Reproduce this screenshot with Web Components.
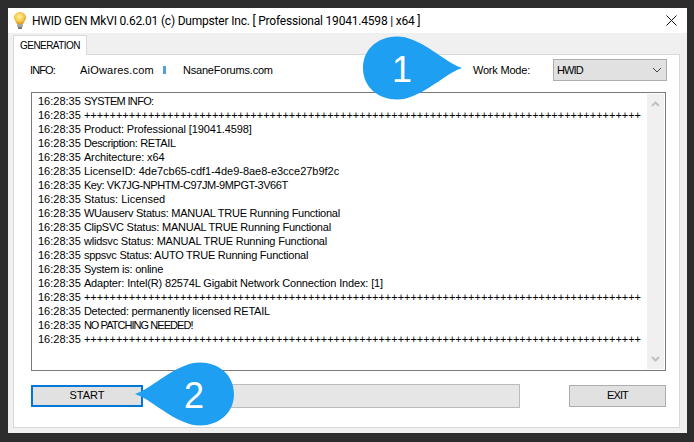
<!DOCTYPE html>
<html>
<head>
<meta charset="utf-8">
<title>HWID GEN</title>
<style>
html, body { margin: 0; height: 100%; }
body { background: #2d2d2d; padding: 8px 7px 9px 8px; box-sizing: border-box; font: 11px "Liberation Sans", Arial, sans-serif; color: #000; overflow: hidden; }
</style>
</head>
<body>
<hwid-window>
  <hwid-titlebar slot="title">HWID GEN MkVI 0.62.01 (c) Dumpster Inc. [ Professional 19041.4598 | x64 ]</hwid-titlebar>
  <hwid-tab slot="tab">GENERATION</hwid-tab>
  <hwid-info slot="top"></hwid-info>
  <hwid-log slot="log"></hwid-log>
  <hwid-actions slot="actions"></hwid-actions>
</hwid-window>
<call-out num="1" dir="right" style="left:363px;top:36px"></call-out>
<call-out num="2" dir="left" style="left:135px;top:362px"></call-out>
<script>
class HwidWindow extends HTMLElement {
    constructor() {
        super();
        this.attachShadow({ mode: 'open' });
    }
    connectedCallback() {
        this.shadowRoot.innerHTML = `
        <style>
            :host { display: flex; flex-direction: column; height: 100%; background: #f0f0f0; }
            .strip { display: flex; padding: 2px 0 0 5px; height: 19px; }
            .panel { flex: 1; margin: 0 7px 5px 5px; background: #fff; border: 1px solid #d9d9d9; padding: 4px 13px 0 17px; display: flex; flex-direction: column; }
        </style>
        <slot name="title"></slot>
        <div class="strip"><slot name="tab"></slot></div>
        <div class="panel">
            <slot name="top"></slot>
            <slot name="log"></slot>
            <slot name="actions"></slot>
        </div>`;
    }
}
class HwidTitlebar extends HTMLElement {
    constructor() {
        super();
        this.attachShadow({ mode: 'open' });
    }
    connectedCallback() {
        this.shadowRoot.innerHTML = `
        <style>
            :host { display: flex; align-items: center; height: 25px; background: #fff; padding-left: 6px; }
            svg { display: block; }
            .text { margin-left: 6px; flex: 1; font: 12px Roboto, "Liberation Sans", sans-serif; letter-spacing: -.2px; white-space: nowrap; }
            .close { margin-right: 10px; }
        </style>
        <svg width="12" height="17" viewBox="0 0 12 17">
            <defs><radialGradient id="b" cx=".45" cy=".4" r=".6"><stop offset="0" stop-color="#fff0a0"/><stop offset=".6" stop-color="#f6cc50"/><stop offset="1" stop-color="#dc9c28"/></radialGradient></defs>
            <path d="M6 0C2.700 0 0 2.500 0 5.600c0 2.600 2 3.700 2.800 6.400h6.400C10 9.300 12 8.200 12 5.600 12 2.500 9.300 0 6 0z" fill="url(#b)"/>
            <rect x="3" y="12" width="6" height="3" rx="1" fill="#a5a598"/>
            <rect x="4" y="15" width="4" height="2" fill="#77776c"/>
        </svg>
        <span class="text"><slot></slot></span>
        <svg class="close" width="11" height="11" viewBox="0 0 11 11"><path d="M.5.5l10 10M10.500.5l-10 10" stroke="#111" stroke-width="1" fill="none"/></svg>`;
    }
}
class HwidTab extends HTMLElement {
    constructor() {
        super();
        this.attachShadow({ mode: 'open' });
    }
    connectedCallback() {
        this.shadowRoot.innerHTML = `
        <style>
            :host { display: flex; align-items: center; justify-content: center; width: 74px; box-sizing: border-box; height: 20px; background: #fff; border: 1px solid #d9d9d9; border-bottom: 0; font-size: 10px; letter-spacing: -.55px; position: relative; z-index: 1; }
        </style>
        <slot></slot>`;
    }
}
class HwidInfo extends HTMLElement {
    constructor() {
        super();
        this.attachShadow({ mode: 'open' });
    }
    connectedCallback() {
        this.shadowRoot.innerHTML = `
        <style>
            :host { display: flex; align-items: center; height: 22px; }
            .info { width: 50px; margin-left: -1px; letter-spacing: -.9px; }
            .site { letter-spacing: .2px; }
            .sep { width: 3px; height: 8px; margin: 0 17px 0 9px; background: #4f9ee0; }
            .site2 { letter-spacing: -.2px; }
            .mode { margin-left: auto; margin-right: 23px; letter-spacing: -.2px; }
            .combo { width: 114px; height: 22px; box-sizing: border-box; margin-right: -1px; border: 1px solid #adadad; background: #e1e1e1; display: flex; align-items: center; justify-content: space-between; padding: 0 4px 1px 3px; }
            .combo span { letter-spacing: -.9px; }
        </style>
        <span class="info">INFO:</span>
        <span class="site">AiOwares.com</span>
        <span class="sep"></span>
        <span class="site2">NsaneForums.com</span>
        <span class="mode">Work Mode:</span>
        <div class="combo">
            <span>HWID</span>
            <svg width="10" height="6" viewBox="0 0 10 6"><path d="M1 1l4 4 4-4" stroke="#444" fill="none"/></svg>
        </div>`;
    }
}
// text, letter-spacing to match the hinted widths of the original
const LOG_LINES = [
    ['SYSTEM INFO:', -.67],
    ['+'],
    ['Product: Professional [19041.4598]', -.12],
    ['Description: RETAIL', -.37],
    ['Architecture: x64', -.12],
    ['LicenseID: 4de7cb65-cdf1-4de9-8ae8-e3cce27b9f2c', -.02],
    ['Key: VK7JG-NPHTM-C97JM-9MPGT-3V66T', -.42],
    ['Status: Licensed', 0],
    ['WUauserv Status: MANUAL TRUE Running Functional', -.25],
    ['ClipSVC Status: MANUAL TRUE Running Functional', -.24],
    ['wlidsvc Status: MANUAL TRUE Running Functional', -.19],
    ['sppsvc Status: AUTO TRUE Running Functional', -.25],
    ['System is: online', -.23],
    ['Adapter: Intel(R) 82574L Gigabit Network Connection Index: [1]', -.15],
    ['+'],
    ['Detected: permanently licensed RETAIL', -.24],
    ['NO PATCHING NEEDED!', -.95],
    ['+']
];
class HwidLog extends HTMLElement {
    constructor() {
        super();
        this.attachShadow({ mode: 'open' });
    }
    connectedCallback() {
        const rows = LOG_LINES.map(([t, ls]) => t === '+'
            ? `<div>16:28:35 <span style="letter-spacing:-.02px">${'+'.repeat(87)}</span></div>`
            : `<div>16:28:35 <span style="letter-spacing:${ls}px">${t}</span></div>`).join('');
        this.shadowRoot.innerHTML = `
        <style>
            :host { display: flex; margin-top: 11px; height: 279px; box-sizing: border-box; border: 1px solid #7a7a7a; background: #fff; padding: 1px; }
            .lines { flex: 1; padding: 0 0 0 5px; line-height: 14px; white-space: nowrap; overflow: hidden; }
            .bar { width: 17px; background: #f0f0f0; display: flex; flex-direction: column; justify-content: space-between; align-items: center; padding: 7px 0; box-sizing: border-box; }
        </style>
        <div class="lines">${rows}</div>
        <div class="bar">
            <svg width="9" height="6" viewBox="0 0 9 6"><path d="M1 5l3.500-3.500L8 5" stroke="#c0c0c0" stroke-width="2" fill="none"/></svg>
            <svg width="9" height="6" viewBox="0 0 9 6"><path d="M1 1l3.500 3.500L8 1" stroke="#c0c0c0" stroke-width="2" fill="none"/></svg>
        </div>`;
    }
}
class HwidActions extends HTMLElement {
    constructor() {
        super();
        this.attachShadow({ mode: 'open' });
    }
    connectedCallback() {
        this.shadowRoot.innerHTML = `
        <style>
            :host { display: flex; align-items: center; margin-top: 13px; height: 24px; }
            button { height: 22px; box-sizing: border-box; background: #e1e1e1; border: 1px solid #adadad; font: inherit; padding: 0 0 2px; color: #000; }
            .start { width: 112px; border: 2px solid #0078d7; }
            .bar { width: 337px; margin-left: 40px; height: 24px; box-sizing: border-box; background: #e6e6e6; border: 1px solid #bcbcbc; }
            .exit { width: 97px; margin-left: 49px; letter-spacing: -.9px; }
        </style>
        <button class="start">START</button>
        <div class="bar"></div>
        <button class="exit">EXIT</button>`;
    }
}
class CallOut extends HTMLElement {
    constructor() {
        super();
        this.attachShadow({ mode: 'open' });
    }
    connectedCallback() {
        const right = this.getAttribute('dir') === 'right';
        this.shadowRoot.innerHTML = `
        <style>
            :host { position: absolute; display: block; width: 100px; height: 64px; }
            svg { position: absolute; left: 0; top: 0; overflow: visible; }
            .num { position: absolute; top: 2px; line-height: 64px; width: 64px; text-align: center; color: #fff; font-size: 36px; ${right ? 'left: 7px' : 'left: 27px'}; }
        </style>
        <svg width="100" height="64" viewBox="0 0 100 64"><path fill="#1e9ff2" d="${right
            ? 'M99 32C86 28 68 11 50 4 28-6 0 6 0 32s28 38 50 28C68 53 86 36 99 32Z'
            : 'M0 32C13 28 31 11 49 4 71-6 99 6 99 32s-28 38-50 28C31 53 13 36 0 32Z'}"/></svg>
        <span class="num">${this.getAttribute('num')}</span>`;
    }
}
customElements.define('hwid-window', HwidWindow);
customElements.define('hwid-titlebar', HwidTitlebar);
customElements.define('hwid-tab', HwidTab);
customElements.define('hwid-info', HwidInfo);
customElements.define('hwid-log', HwidLog);
customElements.define('hwid-actions', HwidActions);
customElements.define('call-out', CallOut);
</script>
</body>
</html>
